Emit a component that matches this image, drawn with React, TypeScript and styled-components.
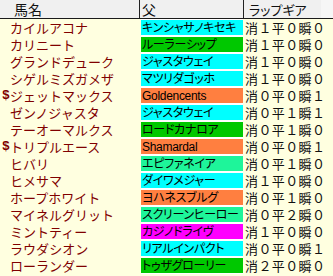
import styled, { createGlobalStyle } from 'styled-components';

interface Horse {
  name: string;
  mark?: boolean;
  sire: string;
  sireColor: string;
  lap: string;
}

const colors = {
  cyan: '#00ffff',
  green: '#00c800',
  orange: '#ff7f40',
  mint: '#1ef59a',
  magenta: '#ff00ff',
};

const horses: Horse[] = [
  { name: 'カイルアコナ', sire: 'キンシャサノキセキ', sireColor: colors.cyan, lap: '消１平０瞬０' },
  { name: 'カリニート', sire: 'ルーラーシップ', sireColor: colors.green, lap: '消１平０瞬０' },
  { name: 'グランドデューク', sire: 'ジャスタウェイ', sireColor: colors.cyan, lap: '消１平０瞬０' },
  { name: 'シゲルミズガメザ', sire: 'マツリダゴッホ', sireColor: colors.cyan, lap: '消１平０瞬０' },
  { name: 'ジェットマックス', mark: true, sire: 'Goldencents', sireColor: colors.orange, lap: '消０平０瞬１' },
  { name: 'ゼンノジャスタ', sire: 'ジャスタウェイ', sireColor: colors.cyan, lap: '消０平１瞬１' },
  { name: 'テーオーマルクス', sire: 'ロードカナロア', sireColor: colors.green, lap: '消０平１瞬０' },
  { name: 'トリプルエース', mark: true, sire: 'Shamardal', sireColor: colors.orange, lap: '消０平０瞬１' },
  { name: 'ヒバリ', sire: 'エピファネイア', sireColor: colors.mint, lap: '消０平１瞬０' },
  { name: 'ヒメサマ', sire: 'ダイワメジャー', sireColor: colors.cyan, lap: '消１平０瞬０' },
  { name: 'ホープホワイト', sire: 'ヨハネスブルグ', sireColor: colors.orange, lap: '消０平１瞬０' },
  { name: 'マイネルグリット', sire: 'スクリーンヒーロー', sireColor: colors.mint, lap: '消０平２瞬０' },
  { name: 'ミントティー', sire: 'カジノドライヴ', sireColor: colors.magenta, lap: '消１平０瞬０' },
  { name: 'ラウダシオン', sire: 'リアルインパクト', sireColor: colors.cyan, lap: '消０平０瞬１' },
  { name: 'ローランダー', sire: 'トゥザグローリー', sireColor: colors.green, lap: '消２平０瞬０' },
];

const GlobalStyle = createGlobalStyle`
  html, body {
    margin: 0;
    padding: 0;
    background: #ffffe0;
  }
  body {
    font-family: 'Noto Sans CJK JP', sans-serif;
  }
`;

const Sheet = styled.div`
  width: 333px;
  height: 276px;
  overflow: hidden;
  background: #ffffe0;
`;

const Header = styled.div`
  display: grid;
  grid-template-columns: 140px 104px 77px 1fr;
  height: 18px;
  background: #f0f0f0;
  border-bottom: 1px solid #1a1a1a;
`;

const HeadCell = styled.div<{ $pad: number; $size?: number; $divider?: boolean; $faint?: boolean }>`
  display: flex;
  align-items: center;
  padding-left: ${({ $pad }) => $pad}px;
  font-size: ${({ $size }) => $size ?? 13}px;
  font-feature-settings: 'palt';
  color: #111;
  background: ${({ $faint }) => ($faint ? '#f6f6f6' : 'transparent')};
  box-shadow: ${({ $divider }) => ($divider ? 'inset -1px 0 0 #222' : 'none')};
  line-height: 1;
`;

const Row = styled.div`
  display: grid;
  grid-template-columns: 141px 102px 1fr;
  height: 17px;
`;

const Name = styled.div`
  display: flex;
  align-items: center;
  padding-left: 2px;
  font-size: 13px;
  color: #800000;
  white-space: nowrap;
  line-height: 1;
`;

const Mark = styled.span`
  display: inline-block;
  width: 8px;
  font-family: 'Liberation Mono', monospace;
  font-size: 13px;
  font-weight: bold;
`;

const SireSlot = styled.div`
  background: #ffffff;
  padding: 1px 0;
`;

const Sire = styled.div<{ $bg: string }>`
  display: flex;
  align-items: center;
  height: 15px;
  padding-left: 1px;
  background: ${({ $bg }) => $bg};
  font-size: 12px;
  letter-spacing: -0.3px;
  font-family: 'Liberation Sans', 'Noto Sans CJK JP', sans-serif;
  font-feature-settings: 'palt';
  color: #000;
  white-space: nowrap;
  overflow: hidden;
  line-height: 1;
`;

const Lap = styled.div`
  display: flex;
  align-items: center;
  padding-left: 2px;
  font-size: 13px;
  letter-spacing: 0.4px;
  color: #111;
  white-space: nowrap;
  line-height: 1;
`;

export default function App() {
  return (
    <Sheet>
      <GlobalStyle />
      <Header>
        <HeadCell $pad={14} $size={14} $divider>
          馬名
        </HeadCell>
        <HeadCell $pad={2} $size={14} $divider>
          父
        </HeadCell>
        <HeadCell $pad={5}>ラップギア</HeadCell>
        <HeadCell $pad={0} $faint />
      </Header>
      {horses.map((h) => (
        <Row key={h.name}>
          <Name>
            <Mark>{h.mark ? '$' : ''}</Mark>
            {h.name}
          </Name>
          <SireSlot>
            <Sire $bg={h.sireColor}>{h.sire}</Sire>
          </SireSlot>
          <Lap>{h.lap}</Lap>
        </Row>
      ))}
    </Sheet>
  );
}
